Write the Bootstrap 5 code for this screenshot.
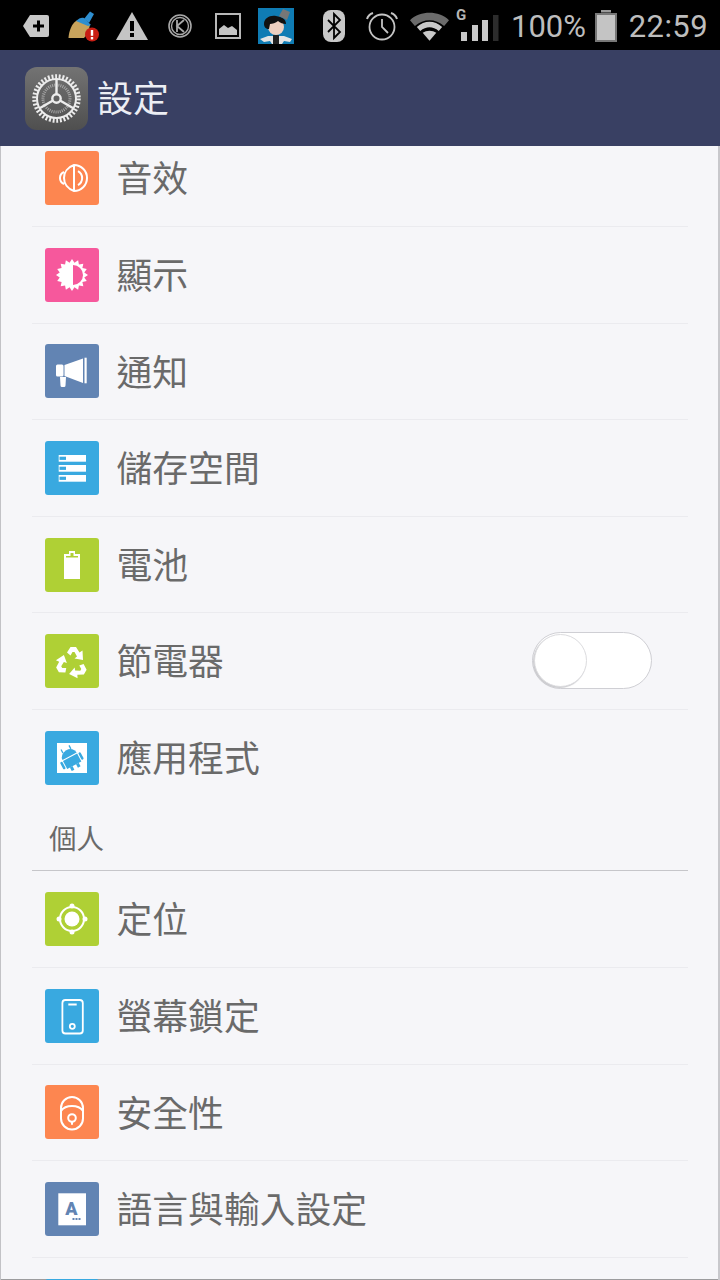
<!DOCTYPE html>
<html lang="zh-Hant">
<head>
    <meta charset="UTF-8">
    <meta name="viewport" content="width=device-width, initial-scale=1.0">
    <title>設定</title>
    <link href="https://cdn.jsdelivr.net/npm/bootstrap@5.3.0/dist/css/bootstrap.min.css" rel="stylesheet">
    <style>
        body {
            width: 720px;
            height: 1280px;
            overflow: hidden;
            background: #f6f6f9;
            font-family: "Noto Sans CJK TC", "Noto Sans", sans-serif;
        }
        .status-strip {
            height: 50px;
            background: #000;
            color: #bdbdbd;
            font-family: Roboto, sans-serif;
            font-size: 31px;
            line-height: 1;
            padding: 2px 12px 0 23px;
        }
        .status-strip svg { display: block; flex: none; }
        .sb-broom { margin-left: 19px; }
        .sb-warn { margin-left: 16px; }
        .sb-k { margin-left: 20px; }
        .sb-pic { margin-left: 23px; }
        .sb-face { margin-left: 17px; }
        .sb-bt { margin-left: 29px; }
        .sb-alarm { margin-left: 21px; }
        .sb-wifi { margin-left: 12px; }
        .sb-signal { margin-left: 7px; }
        .sb-level { margin-left: 12px; }
        .sb-batt { margin-left: 9px; }
        .sb-time { margin-left: auto; letter-spacing: .4px; }
        .app-head {
            height: 96px;
            background: #394063;
            padding-left: 25px;
            gap: 9px;
            color: #eceef4;
            font-size: 36px;
        }
        .app-head span { padding-bottom: 4px; }
        .scroll-area {
            height: 1134px;
            overflow: hidden;
            box-shadow: inset 1px 0 #c2c2c6, inset -2px 0 #c8c8cc, inset 0 -1px #9c9c9e;
        }
        .scroll-inner { margin-top: -15.6px; }
        .set-row {
            height: 96.6px;
            margin: 0 32px;
            padding-left: 13px;
            gap: 17.500px;
            border-bottom: 1px solid #ebebef;
            color: #6a6a6a;
            font-size: 35.8px;
        }
        .set-row span { padding-bottom: 2px; }
        .set-row.no-line { border-bottom: 0; }
        .set-ico {
            width: 54px;
            height: 54px;
            border-radius: 3px;
            flex: none;
        }
        .set-ico svg { display: block; }
        .ico-orange { background: #fd8650; }
        .ico-pink { background: #f6589c; }
        .ico-slate { background: #6284b3; }
        .ico-blue { background: #39a9e0; }
        .ico-lime { background: #afd035; }
        .section-head {
            height: 64.9px;
            margin: 0 32px;
            padding-left: 17px;
            padding-bottom: 2px;
            border-bottom: 1px solid #c6c6ca;
            color: #6a6a6a;
            font-size: 27.5px;
        }
        .fake-toggle {
            width: 120px;
            height: 57px;
            margin-left: auto;
            margin-right: 36px;
            margin-bottom: 2px;
            background: #fff;
            border: 1px solid #cfcfd4;
            border-radius: 29px;
            position: relative;
        }
        .fake-toggle::before {
            content: "";
            position: absolute;
            left: 1px;
            top: 1px;
            width: 53px;
            height: 53px;
            background: #fff;
            border: 1px solid #dcdcdf;
            border-radius: 50%;
            box-shadow: -1px 1px 1px #c9c9cd;
        }
    </style>
</head>
<body>
    <!-- 狀態列 -->
    <div class="status-strip d-flex align-items-center">
        <svg width="26" height="22" viewBox="0 0 26 22"><path d="M7 0h17a2 2 0 0 1 2 2v18a2 2 0 0 1-2 2H7l-7-11z" fill="#c8c8c8"/><path d="M10 9.500h4v-4h3v4h4v3h-4v4h-3v-4h-4z" fill="#000"/></svg>
        <svg class="sb-broom" width="32" height="32" viewBox="0 0 32 32"><path d="M.5 28C1 20 4 14 8 11l7-3 7 7c-1 5-3 10-6 13z" fill="#c8a35c"/><path d="M8 11c3-3 6-4 8-3l7 7-3 1z" fill="#2f8fd0"/><path d="M16 9l6-7.500 4 2.500-5 9z" fill="#2f8fd0"/><circle cx="24" cy="24.500" r="7" fill="#c81e14"/><rect x="22.800" y="20" width="2.400" height="5.800" fill="#fff"/><rect x="22.800" y="27" width="2.400" height="2.400" fill="#fff"/></svg>
        <svg class="sb-warn" width="32" height="28" viewBox="0 0 32 28"><path d="M16 0l16 28H0z" fill="#c4c4c4"/><rect x="14" y="9" width="4" height="10" fill="#000"/><rect x="14" y="21" width="4" height="4" fill="#000"/></svg>
        <svg class="sb-k" width="24" height="24" viewBox="0 0 24 24" fill="none" stroke="#a8a8a8"><circle cx="12" cy="12" r="11" stroke-width="1.600"/><circle cx="12" cy="12" r="8.500" stroke-width="1.400"/><path d="M9 6v12M16 6l-7 6 7 6" stroke-width="1.800"/></svg>
        <svg class="sb-pic" width="26" height="26" viewBox="0 0 26 26"><rect x="1" y="1" width="24" height="24" fill="none" stroke="#b8b8b8" stroke-width="2"/><path d="M4 22v-6l5-4 4 3 4-2 5 4v5z" fill="#c4c4c4"/></svg>
        <svg class="sb-face" width="36" height="36" viewBox="0 0 36 36"><rect width="36" height="36" fill="#0f7cb4"/><path d="M2 31l8-3 16 0 8 3-2 3-6-1-2 3H14l-2-3-6 1z" fill="#e4e4e4"/><path d="M15 27h6v9h-6z" fill="#222"/><circle cx="18" cy="19" r="8" fill="#efd0c0"/><path d="M6 16c0-6 6-9 12-8s10 3 10 8c-3 0-6-1-8-3-2 2-6 3-8 3l-1 5c-3 0-5-2-5-5z" fill="#111"/><path d="M21 8l4-7 7 3-3 8z" fill="#777"/></svg>
        <svg class="sb-bt" width="22" height="32" viewBox="0 0 22 32"><rect width="22" height="32" rx="8" fill="#c8c8c8"/><path d="M5 10l12 12-6 6V4l6 6L5 22" fill="none" stroke="#000" stroke-width="1.800"/></svg>
        <svg class="sb-alarm" width="32" height="30" viewBox="0 0 32 30" fill="none" stroke="#c4c4c4"><circle cx="16" cy="16" r="12.500" stroke-width="1.800"/><path d="M16 8v8l6 6" stroke-width="1.800"/><path d="M1 8c1-3 3-5 6-6M31 8c-1-3-3-5-6-6" stroke-width="2"/></svg>
        <svg class="sb-wifi" width="39" height="30" viewBox="0 0 40 30"><path d="M0 9c11-10 29-10 40 0l-5 6C26 7 14 7 5 15z" fill="#6b6b6b"/><path d="M7 16c8-7 18-7 26 0l-3.500 4c-6-5-13-5-19 0z" fill="#c8c8c8"/><path d="M13 22c4-3 10-3 14 0l-7 8z" fill="#c8c8c8"/></svg>
        <svg class="sb-signal" width="43" height="42" viewBox="0 0 43 42"><text x="0" y="15" font-family="Roboto, sans-serif" font-size="15" font-weight="700" fill="#b5b5b5">G</text><rect x="5" y="27" width="6" height="9" fill="#c8c8c8"/><rect x="16" y="20" width="6" height="16" fill="#c8c8c8"/><rect x="26" y="15" width="6" height="21" fill="#c8c8c8"/><rect x="37" y="10" width="5.500" height="26" fill="#2c2c2c"/></svg>
        <span class="sb-level">100%</span>
        <svg class="sb-batt" width="22" height="32" viewBox="0 0 22 32"><rect x="6" y="0" width="10" height="2.500" fill="#9a9a9a"/><rect x="1" y="4" width="20" height="27" fill="#c4c4c4" stroke="#777" stroke-width="2"/></svg>
        <span class="sb-time">22:59</span>
    </div>

    <!-- 標題列 -->
    <div class="app-head d-flex align-items-center">
        <svg width="63" height="63" viewBox="0 0 63 63">
            <defs><linearGradient id="gearBg" x1="0" y1="0" x2="0" y2="1"><stop offset="0" stop-color="#737373"/><stop offset="1" stop-color="#4f4f4f"/></linearGradient></defs>
            <rect width="63" height="63" rx="12" fill="url(#gearBg)"/>
            <g fill="none" stroke="#ececec" transform="translate(31.500 31.500)">
                <circle r="22" stroke-width="4.500" stroke-dasharray="1.900 1.730"/>
                <circle r="19.500" stroke-width="2"/>
                <circle r="13.500" stroke="#a8a8a8" stroke-width="3" stroke-dasharray="1 1.100"/>
                <path d="M0-4V-20M3.500 2L17.300 10M-3.500 2L-17.300 10" stroke-width="2.400"/>
                <circle r="4.200" stroke-width="2.400"/>
            </g>
        </svg>
        <span>設定</span>
    </div>

    <div class="scroll-area">
        <div class="scroll-inner">
            <div class="set-row d-flex align-items-center">
                <div class="set-ico ico-orange"><svg width="54" height="54" viewBox="0 0 54 54" fill="none" stroke="#fff" stroke-width="2"><path d="M29 14a13 13 0 0 1 0 26c-6-2-10-7-10-13s4-11 10-13zM29 14v26M19 21a6.500 6.500 0 0 0 0 12M33 20a8 8 0 0 1 0 14"/></svg></div>
                <span>音效</span>
            </div>
            <div class="set-row d-flex align-items-center">
                <div class="set-ico ico-pink"><svg width="54" height="54" viewBox="0 0 54 54"><polygon transform="translate(27 27)" fill="#fff" points="16,0 12.26,2.44 14.78,6.12 10.39,6.94 11.31,11.31 6.94,10.39 6.12,14.78 2.44,12.26 0,16 -2.44,12.26 -6.12,14.78 -6.94,10.39 -11.31,11.31 -10.39,6.94 -14.78,6.12 -12.26,2.44 -16,0 -12.26,-2.44 -14.78,-6.12 -10.39,-6.94 -11.31,-11.31 -6.94,-10.39 -6.12,-14.78 -2.44,-12.26 0,-16 2.44,-12.26 6.12,-14.78 6.94,-10.39 11.31,-11.31 10.39,-6.94 14.78,-6.12 12.26,-2.44"/><path d="M28 17a10 10 0 0 1 0 20z" fill="#f6589c"/></svg></div>
                <span>顯示</span>
            </div>
            <div class="set-row d-flex align-items-center">
                <div class="set-ico ico-slate"><svg width="54" height="54" viewBox="0 0 54 54" fill="#fff"><rect x="11" y="20.500" width="7.500" height="12" rx="1.500"/><path d="M19.500 21L38 14.500V39L19.500 32z"/><rect x="39.500" y="13.700" width="2.200" height="25.600"/><path d="M15 33h6l-.5 8.500a1.500 1.500 0 0 1-1.500 1.500h-2a1.500 1.500 0 0 1-1.500-1.500z"/></svg></div>
                <span>通知</span>
            </div>
            <div class="set-row d-flex align-items-center">
                <div class="set-ico ico-blue"><svg width="54" height="54" viewBox="0 0 54 54" fill="#fff"><rect x="13.700" y="14" width="27.300" height="6.700"/><rect x="13.700" y="24" width="27.300" height="6.700"/><rect x="13.700" y="34" width="27.300" height="6.700"/><g fill="#39a9e0"><rect x="14.500" y="15.700" width="6.500" height="3.200"/><rect x="14.500" y="25.700" width="6.500" height="3.200"/><rect x="14.500" y="35.700" width="6.500" height="3.200"/></g></svg></div>
                <span>儲存空間</span>
            </div>
            <div class="set-row d-flex align-items-center">
                <div class="set-ico ico-lime"><svg width="54" height="54" viewBox="0 0 54 54"><path d="M19 16h5v-3h6v3h5v25H19z" fill="#fff"/><path d="M21 18h4.500v-3h3v3H33v1.500H21z" fill="#afd035"/></svg></div>
                <span>電池</span>
            </div>
            <div class="set-row d-flex align-items-center">
                <div class="set-ico ico-lime"><svg width="54" height="54" viewBox="0 0 54 54" fill="#fff"><g id="recycleArrow"><path d="M22 18.500L25.500 13H31L34.500 18.500L37.500 16.500L38 26L29.500 24.500L32 22.500L29.500 18H27.500L25.500 21.500Z"/></g><use href="#recycleArrow" transform="rotate(120 27 29)"/><use href="#recycleArrow" transform="rotate(240 27 29)"/></svg></div>
                <span>節電器</span>
                <div class="fake-toggle"></div>
            </div>
            <div class="set-row no-line d-flex align-items-center">
                <div class="set-ico ico-blue"><svg width="54" height="54" viewBox="0 0 54 54"><rect x="12" y="12" width="30" height="30" fill="#fff"/><g fill="#39a9e0" transform="rotate(-28 26 28)"><path d="M18 25a8 7 0 0 1 16 0z"/><rect x="18" y="26" width="16" height="9"/><rect x="14.500" y="26" width="2.500" height="8" rx="1.200"/><rect x="35" y="26" width="2.500" height="8" rx="1.200"/><rect x="21" y="35" width="3" height="4"/><rect x="28" y="35" width="3" height="4"/><rect x="21" y="15" width="1.300" height="4"/><rect x="30" y="15" width="1.300" height="4"/></g></svg></div>
                <span>應用程式</span>
            </div>
            <div class="section-head d-flex align-items-center">個人</div>
            <div class="set-row d-flex align-items-center">
                <div class="set-ico ico-lime"><svg width="54" height="54" viewBox="0 0 54 54"><circle cx="27" cy="27" r="12" fill="none" stroke="#fff" stroke-width="2"/><circle cx="27" cy="27" r="7.500" fill="#fff"/><g fill="#fff"><circle cx="27" cy="14" r="2.500"/><circle cx="27" cy="40" r="2.500"/><circle cx="14" cy="27" r="2.500"/><circle cx="40" cy="27" r="2.500"/></g></svg></div>
                <span>定位</span>
            </div>
            <div class="set-row d-flex align-items-center">
                <div class="set-ico ico-blue"><svg width="54" height="54" viewBox="0 0 54 54" fill="none" stroke="#fff" stroke-width="1.800"><rect x="17.400" y="11" width="20.400" height="33.500" rx="3"/><path d="M23.300 15.500h8.400" stroke-width="2"/><circle cx="27.300" cy="37.300" r="2.500"/></svg></div>
                <span>螢幕鎖定</span>
            </div>
            <div class="set-row d-flex align-items-center">
                <div class="set-ico ico-orange"><svg width="54" height="54" viewBox="0 0 54 54" fill="none" stroke="#fff" stroke-width="2"><rect x="16" y="12" width="22" height="32.500" rx="11"/><path d="M16 26c2-3 6-5 11-5s9 2 11 5"/><circle cx="27" cy="33" r="3.800"/><path d="M27 36.800v3"/></svg></div>
                <span>安全性</span>
            </div>
            <div class="set-row d-flex align-items-center">
                <div class="set-ico ico-slate"><svg width="54" height="54" viewBox="0 0 54 54"><rect x="13.300" y="11.300" width="27.700" height="32" fill="#fff"/><text x="26.500" y="33" text-anchor="middle" font-family="Roboto, sans-serif" font-size="18" font-weight="900" fill="#6284b3">A</text><g fill="#6284b3"><rect x="27.500" y="36" width="2" height="2"/><rect x="30.500" y="36" width="2" height="2"/><rect x="33.500" y="36" width="2" height="2"/></g></svg></div>
                <span>語言與輸入設定</span>
            </div>
            <!-- 下一列只露出圖示頂端 -->
            <div class="set-row no-line d-flex align-items-center">
                <div class="set-ico ico-blue"></div>
            </div>
        </div>
    </div>
</body>
</html>
